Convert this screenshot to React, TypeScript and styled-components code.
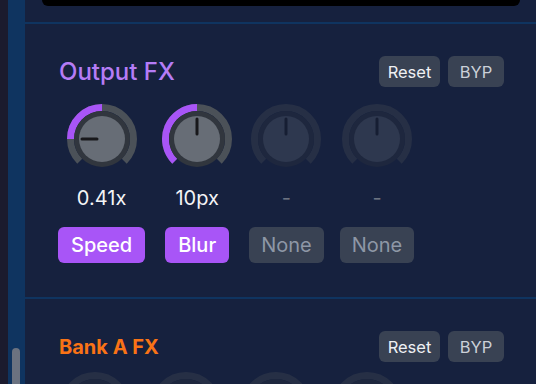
import React, { FC } from 'react'
import styled, { createGlobalStyle } from 'styled-components'

const GlobalStyle = createGlobalStyle`
  html, body {
    margin: 0;
    padding: 0;
    background: #16213e;
    overflow: hidden;
  }
  * { box-sizing: border-box; }
`

type KnobProps = {
  from?: number
  to?: number
  angle: number
  disabled?: boolean
}

const polar = (r: number, deg: number) => {
  const rad = ((deg - 90) * Math.PI) / 180
  return [36 + r * Math.cos(rad), 36 + r * Math.sin(rad)]
}

const arc = (r: number, a: number, b: number) => {
  const [x1, y1] = polar(r, a)
  const [x2, y2] = polar(r, b)
  const large = b - a > 180 ? 1 : 0
  return `M ${x1} ${y1} A ${r} ${r} 0 ${large} 1 ${x2} ${y2}`
}

const Knob: FC<KnobProps> = ({ from, to, angle, disabled }) => {
  const [ix1, iy1] = polar(5, angle)
  const [ix2, iy2] = polar(20, angle)
  return (
    <KnobSvg width="72" height="72" viewBox="0 0 72 72" $disabled={disabled}>
      <path d={arc(31.5, -135, 135)} stroke="#4b5158" strokeWidth="7" fill="none" />
      {from !== undefined && to !== undefined && (
        <path d={arc(31.5, from, to)} stroke="#a855f7" strokeWidth="7" fill="none" />
      )}
      <circle cx="36" cy="36" r="28" fill="#31363e" />
      <circle cx="36" cy="36" r="23" fill="#676d76" />
      <line x1={ix1} y1={iy1} x2={ix2} y2={iy2} stroke="#18181b" strokeWidth="3" strokeLinecap="round" />
    </KnobSvg>
  )
}

type SlotProps = {
  value: string
  label: string
  active?: boolean
  knob: KnobProps
}

const Slot: FC<SlotProps> = ({ value, label, active, knob }) => (
  <SlotCol>
    <Knob {...knob} disabled={!active} />
    <Value $active={active}>{value}</Value>
    <SlotButton $active={active}>{label}</SlotButton>
  </SlotCol>
)

const App = () => (
  <Frame>
    <GlobalStyle />
    <Edge />
    <Rail>
      <Thumb />
    </Rail>
    <Main>
      <TopPanelWrap>
        <TopPanel />
      </TopPanelWrap>
      <Divider />
      <Section>
        <Header>
          <Title $color="#b57cf6" $size={24}>Output FX</Title>
          <Actions>
            <SmallButton>Reset</SmallButton>
            <SmallButton $muted>BYP</SmallButton>
          </Actions>
        </Header>
        <Slots $offset={16}>
          <Slot value="0.41x" label="Speed" active knob={{ from: -90, to: 0, angle: -90 }} />
          <Slot value="10px" label="Blur" active knob={{ from: -135, to: 0, angle: 0 }} />
          <Slot value="-" label="None" knob={{ angle: 0 }} />
          <Slot value="-" label="None" knob={{ angle: 0 }} />
        </Slots>
      </Section>
      <Divider />
      <Section>
        <Header>
          <Title $color="#f97316" $size={20} $bold>Bank A FX</Title>
          <Actions>
            <SmallButton>Reset</SmallButton>
            <SmallButton $muted>BYP</SmallButton>
          </Actions>
        </Header>
        <Slots $offset={9}>
          <Slot value="-" label="None" knob={{ angle: 0 }} />
          <Slot value="-" label="None" knob={{ angle: 0 }} />
          <Slot value="-" label="None" knob={{ angle: 0 }} />
          <Slot value="-" label="None" knob={{ angle: 0 }} />
        </Slots>
      </Section>
    </Main>
  </Frame>
)

export default App

const Frame = styled.div`
  display: flex;
  width: 536px;
  height: 384px;
  overflow: hidden;
  background: #16213e;
  font-family: Inter, 'Noto Sans', sans-serif;
`

const Edge = styled.div`
  width: 8px;
  flex-shrink: 0;
  background: #1b1b2e;
`

const Rail = styled.div`
  position: relative;
  width: 17px;
  flex-shrink: 0;
  background: #0f3460;
`

const Thumb = styled.div`
  position: absolute;
  left: 4px;
  top: 348px;
  width: 8px;
  height: 60px;
  border-radius: 4px;
  background: #6b7280;
`

const Main = styled.div`
  flex: 1;
  display: flex;
  flex-direction: column;
  min-width: 0;
`

const TopPanelWrap = styled.div`
  padding: 0 16px 16px 17px;
`

const TopPanel = styled.div`
  height: 6px;
  background: #000;
  border-radius: 0 0 7px 7px;
`

const Divider = styled.div`
  height: 2px;
  flex-shrink: 0;
  background: #0f3460;
`

const Section = styled.section`
  padding: 32px 32px 34px 33px;
`

const Header = styled.div`
  display: flex;
  align-items: center;
  justify-content: space-between;
  height: 31px;
`

const Title = styled.h2<{ $color: string; $size: number; $bold?: boolean }>`
  margin: 0 0 0 1px;
  font-size: ${({ $size }) => $size}px;
  font-weight: ${({ $bold }) => ($bold ? 700 : 500)};
  color: ${({ $color }) => $color};
`

const Actions = styled.div`
  display: flex;
  gap: 8px;
`

const SmallButton = styled.button<{ $muted?: boolean }>`
  height: 31px;
  padding: 0;
  border: none;
  border-radius: 6px;
  background: #394253;
  color: ${({ $muted }) => ($muted ? '#cbd0d8' : '#eef0f3')};
  font-family: inherit;
  font-size: 16.5px;
  width: ${({ $muted }) => ($muted ? 56 : 61)}px;
`

const Slots = styled.div<{ $offset: number }>`
  display: flex;
  gap: 16px;
  margin-top: ${({ $offset }) => $offset}px;
`

const SlotCol = styled.div`
  display: flex;
  flex-direction: column;
  align-items: center;
`

const KnobSvg = styled.svg<{ $disabled?: boolean }>`
  display: block;
  opacity: ${({ $disabled }) => ($disabled ? 0.3 : 1)};
`

const Value = styled.div<{ $active?: boolean }>`
  margin-top: 12px;
  height: 22px;
  line-height: 22px;
  font-size: 20px;
  color: ${({ $active }) => ($active ? '#f3f4f6' : '#6b7280')};
`

const SlotButton = styled.button<{ $active?: boolean }>`
  margin-top: 18px;
  height: 36px;
  padding: 0 ${({ $active }) => ($active ? 13 : 12)}px;
  border: none;
  border-radius: 6px;
  font-family: inherit;
  font-size: 20px;
  font-weight: ${({ $active }) => ($active ? 500 : 400)};
  background: ${({ $active }) => ($active ? '#a855f7' : '#394253')};
  color: ${({ $active }) => ($active ? '#ffffff' : '#8e97a6')};
`
